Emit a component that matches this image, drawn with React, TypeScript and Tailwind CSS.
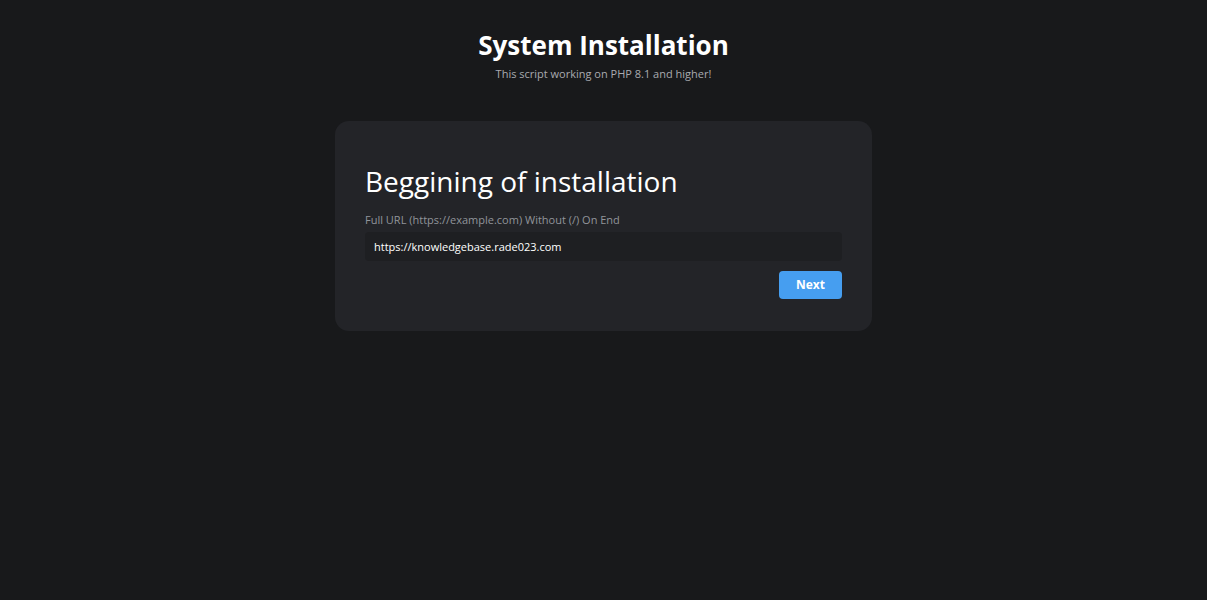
import React, { useState } from "react";

const App: React.FC = () => {
    const [url, setUrl] = useState("https://knowledgebase.rade023.com");

    return (
        <div
            className="min-h-screen w-full bg-[#18191b] flex flex-col items-center"
            style={{ fontFamily: "'Open Sans', 'Liberation Sans', sans-serif" }}
        >
            <div className="flex flex-col items-center pt-[27px]">
                <h1 className="font-[700] text-[26px] leading-[36px] text-white">
                    System Installation
                </h1>
                <p className="text-[11px] leading-[20px] text-[#a9abb0] mt-[1px]">
                    This script working on PHP 8.1 and higher!
                </p>
            </div>

            <div className="w-[537px] mt-[37px] bg-[#232428] rounded-[14px] px-[30px] pt-[42px] pb-[32px] flex flex-col">
                <h2 className="text-[28px] leading-[36px] text-white font-[400]">
                    Beggining of installation
                </h2>
                <label className="text-[11px] leading-[16px] text-[#91949a] mt-[13px]">
                    Full URL (https://example.com) Without (/) On End
                </label>
                <input
                    type="text"
                    value={url}
                    onChange={(e) => setUrl(e.target.value)}
                    className="mt-[4px] h-[29px] bg-[#1e1f22] rounded-[4px] px-[9px] text-[11px] text-white outline-none"
                />
                <div className="flex justify-end mt-[10px]">
                    <button className="w-[63px] h-[28px] bg-[#469ef0] rounded-[4px] text-white text-[12px] font-[700]">
                        Next
                    </button>
                </div>
            </div>
        </div>
    );
};

export default App;
